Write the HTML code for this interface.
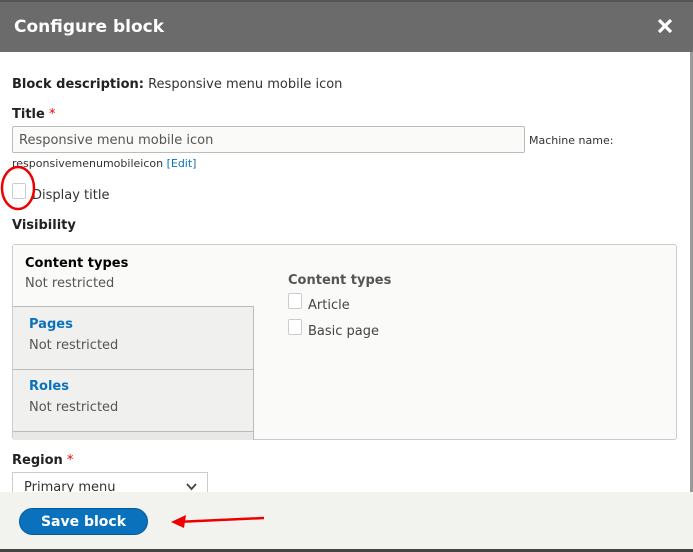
<!DOCTYPE html>
<html><head><style>
*{box-sizing:border-box;margin:0;padding:0}
body{width:693px;height:552px;overflow:hidden;background:#fff;font-family:"DejaVu Sans","Liberation Sans",sans-serif;color:#333;position:relative}
.hdr{position:absolute;left:0;top:0;width:693px;height:52px;background:#6b6b6b;border-top:2px solid #555}
.hdr h1{position:absolute;left:14px;top:15px;font-size:17px;font-weight:bold;color:#fff}
.x{position:absolute;left:656px;top:15px;width:18px;height:18px}
.sb{position:absolute;left:690px;top:52px;width:3px;height:440px;background:#999}
.t{position:absolute;font-size:13px;white-space:nowrap}
b{font-weight:bold;color:#222}
.req{color:#e00}
.inp{position:absolute;left:12px;top:126px;width:513px;height:27px;border:1px solid #bbb;border-radius:2px;background:#fafaf8;font-size:13px;padding:6px 6px;color:#555}
.cb{position:absolute;width:14px;height:16px;border:1px solid #ccc;border-radius:2px;background:#fff}
.vt{position:absolute;left:12px;top:244px;width:665px;height:196px;border:1px solid #ccc;border-radius:3px;background:#fafaf8}
.tab{position:absolute;left:0;width:241px;background:#f0f0ee;border-bottom:1px solid #bbb;border-right:1px solid #bbb}
.footer{position:absolute;left:0;top:492px;width:693px;height:58px;background:#f2f2ef}
.bot{position:absolute;left:0;top:549px;width:693px;height:3px;background:#444}
.btn{position:absolute;left:19px;top:508px;width:129px;height:27px;border-radius:14px;background:#0a72bd;border:1px solid #06589a;color:#fff;font-weight:bold;font-size:14px;text-align:center;line-height:26px}
.sel{position:absolute;left:12px;top:472px;width:196px;height:24px;border:1px solid #ccc;border-bottom:none;background:#fff;font-size:13px;padding:7px 11px;color:#333}
</style></head><body>
<div class="hdr"><h1>Configure block</h1>
<svg class="x" viewBox="0 0 18 18"><path d="M3 3L15 15M15 3L3 15" stroke="#fff" stroke-width="3.2"/></svg></div>
<div class="sb"></div>
<div class="t" style="left:12px;top:77px"><b>Block description:</b> Responsive menu mobile icon</div>
<div class="t" style="left:12px;top:107px"><b>Title</b> <span class="req">*</span></div>
<div class="inp">Responsive menu mobile icon</div>
<div class="t" style="left:529px;top:134px;font-size:11px">Machine name:</div>
<div class="t" style="left:12px;top:157px;font-size:11px">responsivemenumobileicon <span style="color:#0a72bd">[Edit]</span></div>
<div class="cb" style="left:12px;top:183px"></div>
<div class="t" style="left:32px;top:188px">Display title</div>
<svg style="position:absolute;left:0;top:164px" width="50" height="52"><ellipse cx="18" cy="24" rx="16" ry="21" fill="none" stroke="#e00" stroke-width="2.5"/></svg>
<div class="t" style="left:12px;top:218px"><b>Visibility</b></div>
<div class="vt">
 <div style="position:absolute;left:0;top:0;width:241px;height:62px;background:#fafaf8;border-bottom:1px solid #bbb"></div>
 <div class="t" style="left:12px;top:11px"><b style="color:#000">Content types</b></div>
 <div class="t" style="left:12px;top:31px;color:#555">Not restricted</div>
 <div class="tab" style="top:62px;height:63px"></div>
 <div class="t" style="left:16px;top:72px;color:#0a72bd;font-weight:bold">Pages</div>
 <div class="t" style="left:16px;top:93px;color:#555">Not restricted</div>
 <div class="tab" style="top:125px;height:62px"></div>
 <div class="t" style="left:16px;top:134px;color:#0a72bd;font-weight:bold">Roles</div>
 <div class="t" style="left:16px;top:155px;color:#555">Not restricted</div>
 <div class="tab" style="top:187px;height:8px;background:#e8e8e6;border-bottom:none"></div>
 <div class="t" style="left:275px;top:28px;color:#555;font-weight:bold">Content types</div>
 <div class="cb" style="left:275px;top:48px"></div>
 <div class="t" style="left:295px;top:53px;color:#444">Article</div>
 <div class="cb" style="left:275px;top:74px"></div>
 <div class="t" style="left:295px;top:79px;color:#444">Basic page</div>
</div>
<div class="t" style="left:12px;top:453px"><b>Region</b> <span class="req">*</span></div>
<div class="sel">Primary menu<svg style="position:absolute;right:10px;top:10px" width="11" height="8"><path d="M1 1L5.5 6L10 1" stroke="#444" stroke-width="1.8" fill="none"/></svg></div>
<div class="footer"></div>
<div class="bot"></div>
<div class="btn">Save block</div>
<svg style="position:absolute;left:168px;top:510px" width="100" height="24"><path d="M8 12L96 8" stroke="#e00" stroke-width="2.5"/><path d="M3 12L18 5L16 18Z" fill="#e00"/></svg>
</body></html>
